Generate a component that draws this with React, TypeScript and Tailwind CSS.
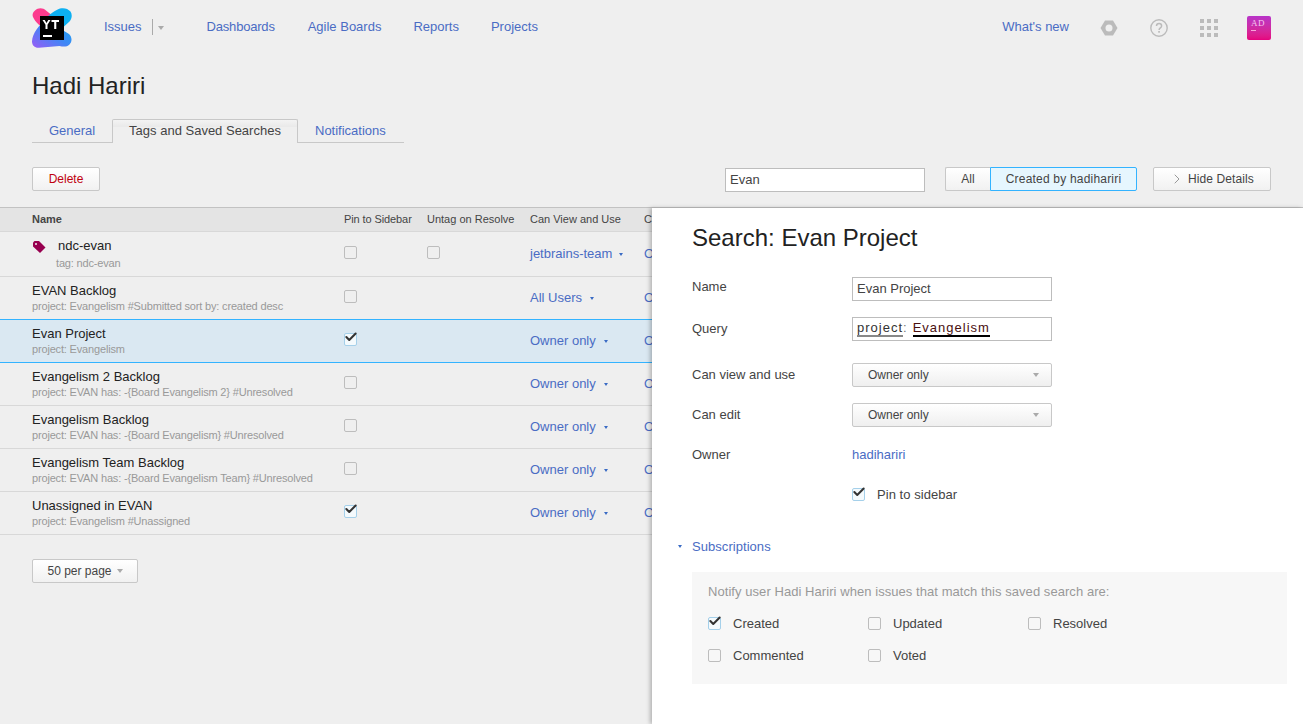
import React from 'react';
import { Check, ChevronRight } from 'lucide-react';

const rows = [
  { name: 'EVAN Backlog', query: 'project: Evangelism #Submitted sort by: created desc', access: 'All Users', pinned: false },
  { name: 'Evan Project', query: 'project: Evangelism', access: 'Owner only', pinned: true, selected: true },
  { name: 'Evangelism 2 Backlog', query: 'project: EVAN has: -{Board Evangelism 2} #Unresolved', access: 'Owner only', pinned: false },
  { name: 'Evangelism Backlog', query: 'project: EVAN has: -{Board Evangelism} #Unresolved', access: 'Owner only', pinned: false },
  { name: 'Evangelism Team Backlog', query: 'project: EVAN has: -{Board Evangelism Team} #Unresolved', access: 'Owner only', pinned: false },
  { name: 'Unassigned in EVAN', query: 'project: Evangelism #Unassigned', access: 'Owner only', pinned: true },
];

function Logo() {
  return (
    <svg width="40" height="40" viewBox="0 0 40 40" className="shrink-0">
      <defs>
        <linearGradient id="ytA" x1="0" y1="1" x2="1" y2="0">
          <stop offset="0" stopColor="#9a5cf6" />
          <stop offset="0.5" stopColor="#3f86f5" />
          <stop offset="1" stopColor="#0cb0f2" />
        </linearGradient>
      </defs>
      <path d="M3 2.500c3-3 8-3 11 0l10 8-10 11C9 19 3 14 1 9 0 6.500 1 4 3 2.500z" fill="#fc3b8e" />
      <path d="M28 .5c4-1 8 0 10.500 3 2 3 1.500 7-1 10L26 24 14 10c4-3.500 9-8 14-9.500z" fill="#0cb0f2" />
      <path d="M14 12 37 26c3 2.500 3.500 7.500 .5 10.500-2.500 2.500-6 2.500-10 1.500L7 39.800C3 40.200 0 37.500 0 33.500 .5 25 7 17 14 12z" fill="url(#ytA)" />
      <rect x="8" y="8" width="24" height="24" fill="#000" />
      <rect x="11" y="27" width="9" height="2" fill="#fff" />
      <path d="M10.500 12h2.200l1.800 3 1.800-3h2.200l-3 4.700V21h-2v-4.300zM19.500 12h7.500v1.900h-2.700V21h-2.100v-7.100h-2.700z" fill="#fff" />
    </svg>
  );
}

function Box({ checked = false, className = '' }: { checked?: boolean; className?: string }) {
  return (
    <span
      className={`relative inline-block w-[13px] h-[13px] rounded-[2px] border ${
        checked ? 'border-[#a5d0ea] bg-[#f4fafd]' : 'border-[#bdbdbd] bg-transparent'
      } ${className}`}
    >
      {checked && (
        <Check size={14} strokeWidth={3.500} className="absolute left-[-1px] top-[-4px] text-[#333]" />
      )}
    </span>
  );
}

function Caret({ className = '' }: { className?: string }) {
  return (
    <span
      className={`inline-block w-0 h-0 border-x-[2.500px] border-x-transparent border-t-[3px] border-t-[#3a6bc4] ${className}`}
    />
  );
}

function GrayCaret({ className = '' }: { className?: string }) {
  return (
    <span
      className={`inline-block w-0 h-0 border-x-[3.500px] border-x-transparent border-t-[4px] border-t-[#aaa] ${className}`}
    />
  );
}

function Select() {
  return (
    <div className="w-[200px] h-[24px] rounded-[2px] border border-[#c8c8c8] bg-linear-to-b from-white to-[#efefef] flex items-center justify-between pl-[15px] pr-[12px] text-[12px] text-[#444]">
      <span>Owner only</span>
      <GrayCaret />
    </div>
  );
}

function FormRow({ label, className = '', children }: { label: string; className?: string; children: React.ReactNode }) {
  return (
    <div className={`flex items-center ${className}`}>
      <div className="w-[160px] text-[#444] text-[13px]">{label}</div>
      {children}
    </div>
  );
}

function Sub({ label, checked = false }: { label: string; checked?: boolean }) {
  return (
    <div className="w-[160px] flex items-center gap-[12px] text-[#444] text-[13px]">
      <Box checked={checked} />
      <span>{label}</span>
    </div>
  );
}

export default function App() {
  return (
    <div className="relative w-[1303px] h-[724px] overflow-hidden bg-[#efefef] text-[13px] text-[#222] font-['Liberation_Sans',Arial,sans-serif]">
      <header className="h-[56px] pl-[32px] pr-[32px] flex items-center text-[#4a6cc4]">
        <Logo />
        <span className="ml-[32px] -mt-[2px]">Issues</span>
        <span className="ml-[10px] -mt-[2px] h-[16px] border-l border-[#aaa]" />
        <GrayCaret className="ml-[5px]" />
        <nav className="ml-[43px] -mt-[2px] flex gap-[32px]">
          <span className="mr-px tracking-[-0.2px]">Dashboards</span>
          <span>Agile Boards</span>
          <span>Reports</span>
          <span>Projects</span>
        </nav>
        <span className="ml-auto -mt-[2px]">What's new</span>
        <svg width="18" height="18" viewBox="0 0 18 18" className="ml-[31px]">
          <path d="M5 1.500h8l4.500 7.500-4.500 7.500H5L.5 9z" fill="#bbb" />
          <circle cx="9" cy="9" r="3.500" fill="#efefef" />
        </svg>
        <svg width="18" height="18" viewBox="0 0 18 18" className="ml-[32px]">
          <circle cx="9" cy="9" r="8.200" fill="none" stroke="#bbb" strokeWidth="1.400" />
          <path d="M6.500 7c0-1.500 1.100-2.400 2.600-2.400S11.600 5.500 11.600 7c0 1.900-2.500 2-2.500 4" fill="none" stroke="#bbb" strokeWidth="1.500" />
          <rect x="8.200" y="12" width="1.700" height="1.700" fill="#bbb" />
        </svg>
        <div className="ml-[32px] grid grid-cols-3 gap-[3px]">
          {[0, 1, 2, 3, 4, 5, 6, 7, 8].map((i) => (
            <span key={i} className="w-[4px] h-[4px] bg-[#bbb]" />
          ))}
        </div>
        <div className="ml-[29px] w-[24px] h-[24px] rounded-[2px] bg-linear-to-b from-[#b833c8] to-[#e6007e] px-[4px] pt-[3px] leading-none">
          <div className="text-[9px] text-[#f7c6ee] font-['Liberation_Serif',serif] tracking-[0.5px]">AD</div>
          <div className="mt-[2px] w-[5px] h-px bg-[#f7a6d8]" />
        </div>
      </header>

      <h1 className="ml-[32px] mt-[16px] text-[24px] leading-[28px] text-[#222]">Hadi Hariri</h1>

      <div className="ml-[32px] mt-[19px] w-[372px] h-[24px] flex items-end border-b border-[#c8c8c8] text-[13px]">
        <span className="w-[80px] h-[23px] text-center leading-[24px] text-[#4a6cc4]">General</span>
        <span className="relative top-px w-[186px] h-[24px] text-center leading-[22px] text-[#444] border border-b-0 border-[#c8c8c8] rounded-t-[2px] bg-linear-to-b from-[#f3f3f3] to-[#e9e9e9] bg-[length:100%_30%] bg-no-repeat bg-[#efefef]">
          Tags and Saved Searches
        </span>
        <span className="ml-[17px] h-[23px] leading-[24px] text-[#4a6cc4]">Notifications</span>
      </div>

      <div className="mt-[24px] pl-[32px] pr-[32px] h-[24px] flex items-start">
        <button className="w-[68px] h-[24px] rounded-[2px] border border-[#c8c8c8] bg-linear-to-b from-white to-[#f1f1f1] text-[12px] text-[#c00010]">
          Delete
        </button>
        <div className="ml-[625px] mt-px w-[200px] h-[24px] border border-[#bdbdbd] bg-white pl-[4px] text-[13px] text-[#444] leading-[21px]">
          Evan
        </div>
        <div className="ml-[20px] flex h-[24px] text-[12px] text-[#444]">
          <span className="w-[45px] rounded-l-[2px] border border-r-0 border-[#c8c8c8] bg-linear-to-b from-white to-[#f1f1f1] text-center leading-[22px]">
            All
          </span>
          <span className="w-[147px] rounded-r-[2px] border border-[#33b3ff] bg-[#e6f6fe] text-center leading-[22px] tracking-[0.2px]">
            Created by hadihariri
          </span>
        </div>
        <div className="ml-[16px] w-[118px] h-[24px] flex items-center rounded-[2px] border border-[#c8c8c8] bg-linear-to-b from-white to-[#f1f1f1] pl-[15px] text-[12px] text-[#444] tracking-[0.1px]">
          <ChevronRight size={16} strokeWidth={1.500} className="text-[#999]" />
          <span className="ml-[3px]">Hide Details</span>
        </div>
      </div>

      <div className="mt-[16px] h-[25px] bg-[#e4e4e4] border-y border-t-[#c2c2c2] border-b-[#d8d8d8] flex items-center pl-[32px] text-[11px] text-[#444] whitespace-nowrap">
        <span className="w-[312px] font-bold">Name</span>
        <span className="w-[83px] tracking-[-0.1px]">Pin to Sidebar</span>
        <span className="w-[103px]">Untag on Resolve</span>
        <span className="w-[114px]">Can View and Use</span>
        <span className="w-[8px] overflow-hidden">Can Edit</span>
      </div>

      <div className="h-[45px] border-b border-[#d8d8d8] flex pl-[32px] whitespace-nowrap">
        <div className="w-[312px] relative">
          <svg width="14" height="14" viewBox="0 0 14 14" className="absolute left-0 top-[8px]">
            <path d="M1 2.500 2.500 1H7l6.500 6.500-5.500 5.500L1 6.500z" fill="#97004f" />
            <circle cx="4" cy="4" r="1" fill="#efefef" />
          </svg>
          <div className="ml-[26px] mt-[6px] text-[13px] leading-[16px] text-[#222]">ndc-evan</div>
          <div className="ml-[24px] mt-[3px] text-[11px] leading-[13px] text-[#999] tracking-[-0.17px]">tag: ndc-evan</div>
        </div>
        <div className="w-[83px] pt-[13px]"><Box /></div>
        <div className="w-[103px] pt-[13px]"><Box /></div>
        <div className="w-[114px] pt-[14px] text-[#4a6cc4] leading-[16px] flex items-start">
          <span>jetbrains-team</span>
          <Caret className="ml-[7px] mt-[7px]" />
        </div>
        <div className="w-[8px] overflow-hidden pt-[14px] text-[#4a6cc4] leading-[16px]">Owner only</div>
      </div>

      {rows.map((r) => (
        <div
          key={r.name}
          className={`flex pl-[32px] whitespace-nowrap border-b ${
            r.selected ? 'bg-[#dae8f2] border-[#33b3ff] -mt-px h-[44px] border-t border-t-[#33b3ff]' : 'h-[43px] border-[#d8d8d8]'
          }`}
        >
          <div className="w-[312px]">
            <div className="mt-[6px] text-[13px] leading-[16px] text-[#222]">{r.name}</div>
            <div className="mt-[1px] text-[11px] leading-[13px] text-[#999] tracking-[-0.17px]">{r.query}</div>
          </div>
          <div className="w-[83px] pt-[12px]"><Box checked={r.pinned} /></div>
          <div className="w-[103px]" />
          <div className="w-[114px] pt-[13px] text-[#4a6cc4] leading-[16px] flex items-start">
            <span>{r.access}</span>
            <Caret className="ml-[8px] mt-[7px]" />
          </div>
          <div className="w-[8px] overflow-hidden pt-[13px] text-[#4a6cc4] leading-[16px]">Owner only</div>
        </div>
      ))}

      <div className="ml-[32px] mt-[24px] w-[106px] h-[24px] rounded-[2px] border border-[#c8c8c8] bg-linear-to-b from-white to-[#f1f1f1] flex items-center justify-center gap-[5px] text-[12px] text-[#444]">
        <span>50 per page</span>
        <GrayCaret />
      </div>

      <aside className="absolute left-[652px] right-0 top-[208px] bottom-0 bg-white shadow-[-2px_0_4px_rgba(0,0,0,0.25)] text-[13px] text-[#444] pr-[16px]">
        <h2 className="ml-[40px] mt-[16px] text-[24px] leading-[28px] text-[#222]">Search: Evan Project</h2>

        <FormRow label="Name" className="ml-[40px] mt-[25px] items-start">
          <div className="w-[200px] h-[24px] border border-[#bdbdbd] pl-[4px] leading-[21px] text-[#444]">Evan Project</div>
        </FormRow>
        <FormRow label="Query" className="ml-[40px] mt-[16px]">
          <div className="w-[200px] h-[24px] border border-[#bdbdbd] pl-[4px] text-[13px] leading-[20px] tracking-[1px] flex">
            <span className="h-[19px] border-b-2 border-[#888] text-[#333]">project</span>
            <span className="text-[#777]">:</span>
            <span className="ml-[5px] h-[19px] border-b-2 border-black text-[#4a1010]">Evangelism</span>
          </div>
        </FormRow>
        <FormRow label="Can view and use" className="ml-[40px] mt-[22px]">
          <Select />
        </FormRow>
        <FormRow label="Can edit" className="ml-[40px] mt-[16px]">
          <Select />
        </FormRow>
        <FormRow label="Owner" className="ml-[40px] mt-[18px]">
          <span className="text-[#4a6cc4]">hadihariri</span>
        </FormRow>
        <div className="ml-[200px] mt-[22px] flex items-center gap-[12px] leading-[16px]">
          <Box checked />
          <span className="tracking-[0.05px]">Pin to sidebar</span>
        </div>

        <div className="ml-[26px] mt-[36px] flex items-center gap-[10px] text-[#4a6cc4] leading-[16px] tracking-[0.05px]">
          <Caret className="border-t-[#1a6fd8]" />
          <span>Subscriptions</span>
        </div>

        <div className="ml-[40px] mt-[17px] h-[112px] bg-[#f7f7f7] pl-[16px] pt-[12px]">
          <div className="text-[#999] leading-[16px] tracking-[0.06px]">Notify user Hadi Hariri when issues that match this saved search are:</div>
          <div className="mt-[16px] flex leading-[16px]">
            <Sub label="Created" checked />
            <Sub label="Updated" />
            <Sub label="Resolved" />
          </div>
          <div className="mt-[16px] flex leading-[16px]">
            <Sub label="Commented" />
            <Sub label="Voted" />
          </div>
        </div>
      </aside>
    </div>
  );
}
